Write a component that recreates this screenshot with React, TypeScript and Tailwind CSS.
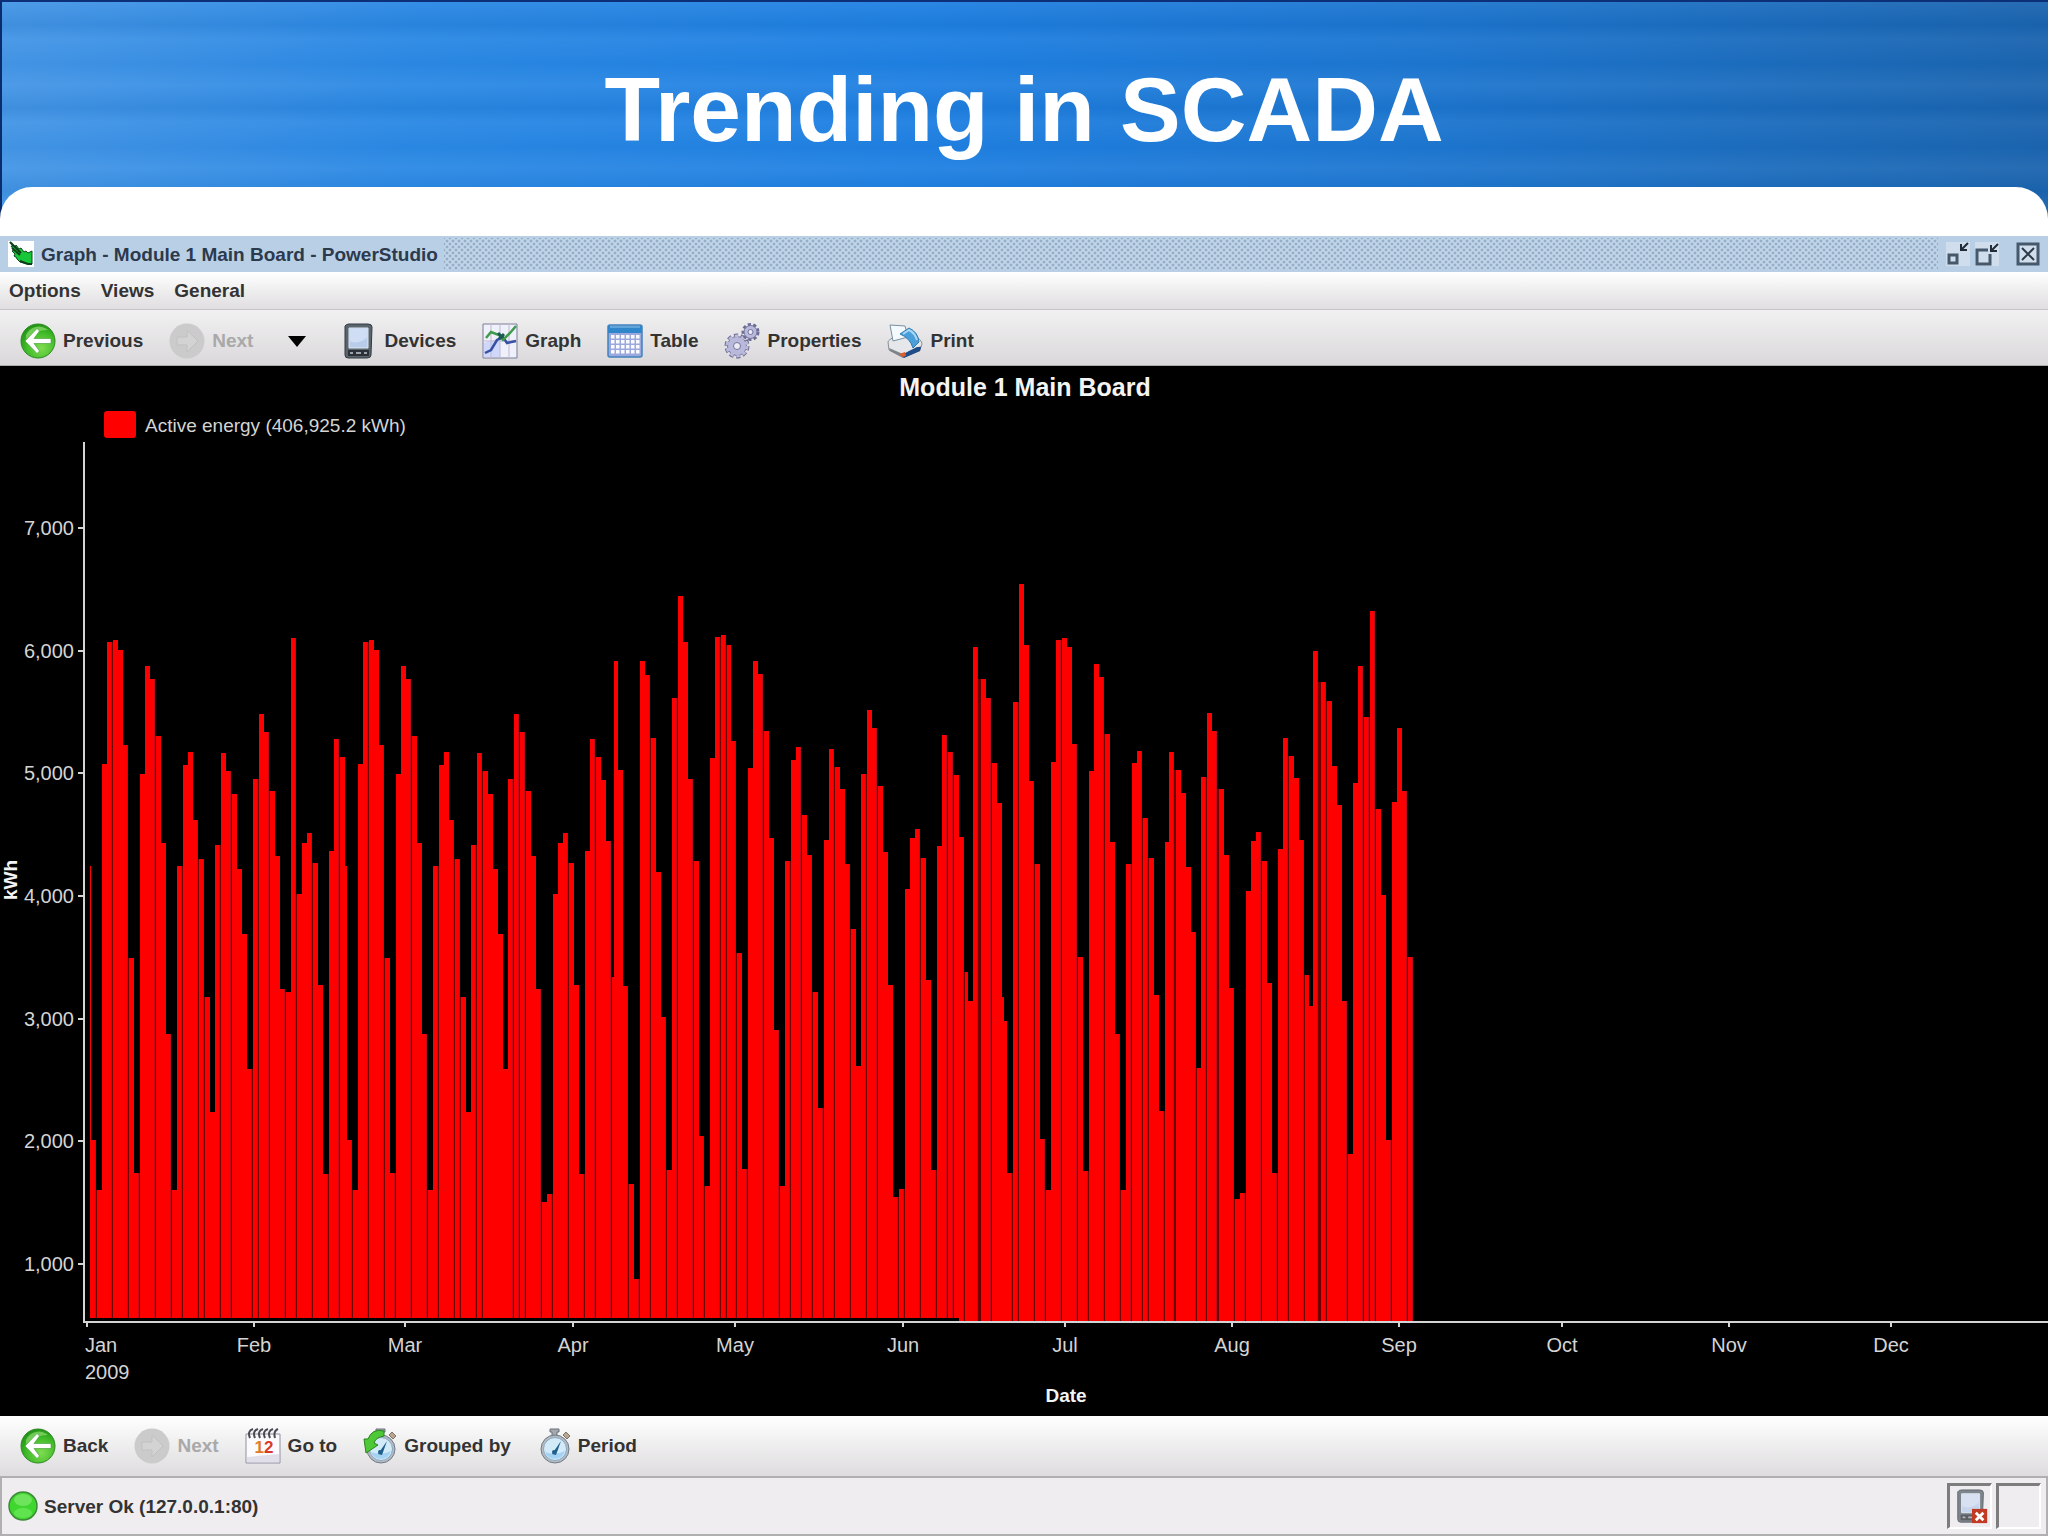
import type { ReactNode } from "react";

// [left edge, kWh] of every daily bar
const bars: [number, number][] = [
  [90, 4248], [91, 2010], [97, 1600], [102, 5080], [107, 6072], [113, 6090], [118, 6005],
  [123, 5233], [129, 3493], [134, 1745], [140, 4998], [145, 5876], [150, 5770], [156, 5305],
  [161, 4431], [166, 2875], [172, 1600], [177, 4248], [183, 5071], [188, 5173], [193, 4619],
  [199, 4299], [205, 3174], [210, 2236], [215, 4418], [221, 5164], [226, 5015], [232, 4832],
  [237, 4218], [242, 3694], [247, 2590], [253, 4956], [259, 5480], [264, 5335], [270, 4857],
  [275, 4325], [280, 3238], [286, 3216], [291, 6102], [297, 4018], [302, 4431], [307, 4512],
  [313, 4273], [318, 3276], [323, 1737], [329, 4363], [334, 5280], [340, 5130], [345, 4248],
  [347, 2010], [353, 1600], [358, 5080], [363, 6072], [369, 6090], [374, 6005], [379, 5233],
  [385, 3493], [390, 1745], [396, 4998], [401, 5876], [406, 5770], [412, 5305], [417, 4431],
  [422, 2875], [428, 1600], [433, 4248], [439, 5071], [444, 5173], [449, 4619], [455, 4299],
  [461, 3174], [466, 2236], [471, 4418], [477, 5164], [483, 5015], [488, 4832], [493, 4218],
  [498, 3694], [503, 2590], [508, 4956], [514, 5480], [520, 5335], [526, 4857], [531, 4325],
  [536, 3238], [542, 1502], [547, 1571], [553, 4018], [558, 4431], [563, 4512], [569, 4273],
  [574, 3276], [579, 1737], [585, 4363], [590, 5280], [596, 5130], [601, 4943], [606, 4448],
  [612, 3340], [614, 5919], [618, 5028], [623, 3263], [629, 1652], [634, 880], [640, 5919],
  [645, 5804], [651, 5288], [656, 4192], [661, 3016], [667, 1763], [672, 5612], [678, 6448],
  [683, 6072], [688, 4956], [694, 4286], [699, 2044], [705, 1639], [710, 5122], [715, 6115],
  [721, 6128], [727, 6043], [731, 5267], [737, 3532], [742, 1775], [748, 5041], [753, 5919],
  [758, 5812], [764, 5348], [769, 4469], [774, 2909], [780, 1639], [785, 4286], [791, 5109],
  [796, 5211], [802, 4657], [807, 4337], [813, 3216], [818, 2274], [824, 4457], [829, 5198],
  [835, 5049], [840, 4870], [845, 4261], [851, 3732], [856, 2611], [861, 4998], [867, 5514],
  [872, 5373], [878, 4896], [883, 4359], [888, 3276], [893, 1545], [899, 1609], [905, 4060],
  [910, 4469], [915, 4546], [921, 4312], [926, 3319], [931, 1767], [937, 4406], [942, 5314],
  [948, 5173], [954, 4985], [959, 4482], [965, 3378], [968, 3140], [973, 6026], [981, 5770],
  [986, 5612], [992, 5088], [997, 4760], [1002, 3174], [1004, 2982], [1007, 1745], [1013, 5582],
  [1019, 6541], [1024, 6047], [1029, 4934], [1035, 4261], [1040, 2019], [1046, 1605], [1051, 5096],
  [1056, 6090], [1062, 6102], [1067, 6026], [1072, 5241], [1078, 3506], [1083, 1758], [1089, 5015],
  [1094, 5893], [1099, 5783], [1105, 5318], [1110, 4440], [1115, 2879], [1121, 1605], [1126, 4261],
  [1132, 5083], [1137, 5182], [1143, 4632], [1149, 4308], [1154, 3191], [1159, 2244], [1165, 4440],
  [1169, 5173], [1176, 5028], [1181, 4841], [1186, 4235], [1191, 3706], [1197, 2598], [1201, 4973],
  [1207, 5493], [1212, 5348], [1219, 4870], [1224, 4337], [1229, 3246], [1235, 1532], [1240, 1579],
  [1246, 4039], [1251, 4448], [1256, 4525], [1262, 4286], [1267, 3293], [1272, 1745], [1278, 4380],
  [1283, 5288], [1289, 5139], [1294, 4964], [1299, 4457], [1305, 3357], [1309, 3105], [1313, 5996],
  [1321, 5744], [1327, 5591], [1332, 5058], [1337, 4742], [1342, 3148], [1348, 1895], [1353, 4921],
  [1358, 5876], [1364, 5459], [1370, 6320], [1376, 4713], [1381, 4005], [1386, 2010], [1392, 4764],
  [1397, 5373], [1402, 4857], [1408, 3506], [1414, 0],
];

const months: [string, number][] = [
  ["Feb", 254], ["Mar", 405], ["Apr", 573], ["May", 735], ["Jun", 903], ["Jul", 1065],
  ["Aug", 1232], ["Sep", 1399], ["Oct", 1562], ["Nov", 1729], ["Dec", 1891],
];

const levels = [1000, 2000, 3000, 4000, 5000, 6000, 7000];

const toY = (kwh: number) => Math.round(898 - ((kwh - 1000) * 736) / 6000);

function EnergyChart() {
  return (
    <svg
      viewBox="0 0 2048 1050"
      className="block w-full bg-black font-['Liberation_Sans',sans-serif] font-normal"
      role="img"
      aria-label="Active energy per day"
    >
      <text x="1025" y="30" textAnchor="middle" fontSize="25" fontWeight="bold" fill="#f4f4f4">
        Module 1 Main Board
      </text>
      <rect x="104" y="45" width="32" height="27" rx="3" fill="#fe0000" />
      <text x="145" y="66" fontSize="19" fill="#d4d4d4">
        Active energy (406,925.2 kWh)
      </text>
      {bars.slice(0, -1).map(([x, kwh], i) => {
        const [nextX, nextKwh] = bars[i + 1];
        const base = x < 955 ? 952 : 955;
        const top = toY(kwh);
        const width = Math.min(5, nextX - x);
        const seam = nextX - x - width;
        const seamTop = Math.max(top, toY(nextKwh));
        return (
          <g key={x}>
            <rect x={x} y={top} width={width} height={base - top} fill="#fe0000" />
            {seam > 0 && (
              <rect x={x + width - 1} y={top} width="1" height={base - top} fill="#c40a1c" />
            )}
            {seam > 0 && seamTop < base && (
              <rect x={x + width} y={seamTop} width={seam} height={base - seamTop} fill="#6c0000" />
            )}
          </g>
        );
      })}
      <g fill="#d4d4d4">
        <rect x="83" y="76" width="2" height="881" />
        <rect x="83" y="955" width="1965" height="2" />
        <rect x="86" y="957" width="2" height="4" />
        {months.map(([name, x]) => (
          <rect key={name} x={x - 1} y="957" width="2" height="4" />
        ))}
        {levels.map((level) => (
          <rect key={level} x="78" y={toY(level) - 1} width="5" height="2" />
        ))}
      </g>
      <g fontSize="20" fill="#d4d4d4">
        {levels.map((level) => (
          <text key={level} x="74" y={toY(level) + 7} textAnchor="end">
            {level.toLocaleString("en-US")}
          </text>
        ))}
        <text x="85" y="986">Jan</text>
        <text x="85" y="1013">2009</text>
        {months.map(([name, x]) => (
          <text key={name} x={x} y="986" textAnchor="middle">
            {name}
          </text>
        ))}
      </g>
      <g fontSize="19" fontWeight="bold" fill="#f4f4f4" textAnchor="middle">
        <text x="1066" y="1036">Date</text>
        <text transform="translate(17 514) rotate(-90)">kWh</text>
      </g>
    </svg>
  );
}

function ArrowIcon({ disabled = false }: { disabled?: boolean }) {
  if (disabled) {
    return (
      <svg viewBox="0 0 36 36" className="size-9">
        <circle cx="18" cy="18" r="17.5" fill="#cbcbcb" />
        <path d="M18 7l11 11-11 11v-7H8v-8h10z" fill="#d3d3d3" stroke="#c1c1c1" />
      </svg>
    );
  }
  return (
    <svg viewBox="0 0 36 36" className="size-9">
      <defs>
        <radialGradient id="arrow-green" cx="0.6" cy="0.7" r="0.7">
          <stop offset="0" stopColor="#7fdc50" />
          <stop offset="0.6" stopColor="#43bd2b" />
          <stop offset="1" stopColor="#229316" />
        </radialGradient>
      </defs>
      <circle cx="18" cy="18" r="17" fill="url(#arrow-green)" stroke="#2c8a22" />
      <path d="M6 12a14 14 0 0 1 22-5c-8 0-15 3-22 9z" fill="#9be67c" opacity="0.6" />
      <path
        d="M17 5.5l2.5 2.5-5.5 7.5h17v5H14l5.5 7.5-2.5 2.5L5 18z"
        fill="#fff"
        stroke="#3d9a31"
        strokeWidth="0.6"
      />
    </svg>
  );
}

function DeviceBody() {
  return (
    <>
      <path d="M4 3q1-2 4-2h19q4 0 4 3l-1 28q0 3-4 3H7q-3 0-3-3z" fill="#59646d" stroke="#323a42" />
      <path d="M8 5h19v20H8z" fill="#b9cdea" stroke="#dde6f0" />
      <path d="M8.5 18c6 3 13 1 18-4V5.5h-18z" fill="#cfdef4" />
      <path d="M7 27h21v6H7z" fill="#2b3136" />
      <path d="M9 30h3m3 0h5m3 0h3" stroke="#9aa4aa" strokeWidth="2" />
    </>
  );
}

function DeviceIcon() {
  return (
    <svg viewBox="0 0 36 36" className="size-9">
      <DeviceBody />
    </svg>
  );
}

function GraphIcon() {
  return (
    <svg viewBox="0 0 36 36" className="size-9" fill="none">
      <path d="M1 1h34v34H1z" fill="#eef0fa" stroke="#7d7d99" />
      <path d="M2 20l16-5v19H2z" fill="#cfd8fa" />
      <path d="M18 1v34M27 1v34M9 1v34M1 18h34" stroke="#c3b8d3" />
      <path d="M3 30l6-3 6-10 6-3 4 6 9-2" stroke="#3550a5" strokeWidth="2.5" />
      <path d="M4 15l5-6 8 3 4 5 7-7 6-7" stroke="#3f9a4b" strokeWidth="2.5" />
      <path d="M16 10l5 5M17 16l5-5" stroke="#1d5a54" strokeWidth="3" />
    </svg>
  );
}

function TableIcon() {
  return (
    <svg viewBox="0 0 36 36" className="size-9" fill="none">
      <rect x="1" y="2" width="34" height="32" rx="2" fill="#9aa8dd" stroke="#3f82be" strokeWidth="1.5" />
      <path d="M1 3h34v7H1z" fill="#2f86cb" />
      <path d="M3 4h30" stroke="#8fc3ea" />
      {[4, 9, 14, 19, 24, 29].map((x) =>
        [12, 17, 22, 27].map((y) => (
          <rect key={`${x}-${y}`} x={x} y={y} width="3.5" height="3.5" fill="#fbfbff" />
        )),
      )}
    </svg>
  );
}

function GearsIcon() {
  return (
    <svg viewBox="0 0 36 36" className="size-9" fill="none">
      <circle cx="13" cy="23" r="10.5" stroke="#6c6c94" strokeWidth="4" strokeDasharray="4 2.6" />
      <circle cx="13" cy="23" r="9.5" fill="#b9b9dc" stroke="#74749c" />
      <circle cx="13" cy="23" r="10" stroke="#b9b9dc" strokeWidth="3" strokeDasharray="3.4 3" />
      <circle cx="13" cy="23" r="3.5" fill="#ecebf3" stroke="#74749c" />
      <circle cx="26.5" cy="9" r="7.5" stroke="#6c6c94" strokeWidth="3" strokeDasharray="3.2 2.2" />
      <circle cx="26.5" cy="9" r="6.5" fill="#b9b9dc" stroke="#74749c" />
      <circle cx="26.5" cy="9" r="2.5" fill="#ecebf3" stroke="#74749c" />
    </svg>
  );
}

function PrinterIcon() {
  return (
    <svg viewBox="0 0 36 36" className="size-9">
      <path d="M1 19q0-2 8-6l18-1q8 5 8 9l-2 6-17 7L2 27z" fill="#e6e7ea" stroke="#8a9097" />
      <path d="M2 25l14 6 18-8-1 5-17 7-13-7z" fill="#7d848c" />
      <path d="M3 2l15 1 3 11-15 4z" fill="#f3f9fd" stroke="#7890a3" />
      <path d="M13 11l9-6q9 4 10 14l-6 6q-3-10-13-14z" fill="#4a9fda" stroke="#2f7bb0" />
      <path d="M16 11l6-4q6 3 8 10" fill="none" stroke="#a8d6f5" strokeWidth="2" />
      <path d="M15 32l7-4 8-4 4 0-1 4-16 7z" fill="#1f4d88" />
      <path d="M12 31l6-2 1 4-4 1z" fill="#d8602c" />
    </svg>
  );
}

function CalendarIcon() {
  return (
    <svg viewBox="0 0 36 36" className="size-9">
      <path d="M1 6h34v29H1z" fill="#fbfafc" stroke="#8f8fa4" />
      <path d="M2 29l32-3v8H2z" fill="#e1e0ea" />
      <path
        d="M5 10q-3-7 3-9m2 9q-3-7 3-9m2 9q-3-7 3-9m2 9q-3-7 3-9m2 9q-3-7 3-9m2 9q-2-7 3-9"
        fill="none"
        stroke="#4b4b52"
        strokeWidth="2"
      />
      <text x="19" y="25" textAnchor="middle" fontSize="17" fontWeight="bold">
        <tspan fill="#e07a26">1</tspan>
        <tspan fill="#d8392b">2</tspan>
      </text>
    </svg>
  );
}

function StopwatchIcon({ grouped = false }: { grouped?: boolean }) {
  return (
    <svg viewBox="1 0 34 36" className="h-9 w-[34px]">
      <path d="M14 1h9v3h-2v5h-5V4h-2z" fill="#a5aab0" stroke="#6b7178" />
      <path d="M27 7l3-3 4 4-3 3z" fill="#b9a48e" stroke="#7d746b" />
      <circle cx="19" cy="21" r="14" fill="#b4bcc5" stroke="#6f7a86" />
      <circle cx="19" cy="21" r="11.5" fill="#d3ebf9" stroke="#8ba3b6" />
      <path d="M9 24a10.5 10.5 0 0 0 20-1q-10 5-20 1z" fill="#a4d2f2" />
      <path d="M16 26l9-13-5 14z" fill="#1f5f8e" />
      <circle cx="18" cy="24" r="2" fill="#1f5f8e" />
      {grouped && (
        <path
          d="M22 3q-12-3-16 8H2l2 14 12-8-4-2q2-6 10-7z"
          fill="#4fc838"
          stroke="#27831c"
        />
      )}
    </svg>
  );
}

function HandIcon() {
  return (
    <svg viewBox="0 0 26 26" className="size-[26px] bg-white">
      <path
        d="M2 1l5 5 1-2 3 4 2-1 3 4 2-1 2 2 4-2v13l-5 0-7-2-3-3-1-2-2-1 1-2-3-3 2-1-3-4 2 0z"
        fill="#18c63a"
        stroke="#0d4a1c"
      />
      <path d="M2 1l11 11M4 7l8 7M12 20l8 3h4" stroke="#0b3f18" strokeWidth="2" fill="none" />
    </svg>
  );
}

type ToolButtonProps = {
  icon: ReactNode;
  label: string;
  disabled?: boolean;
};

function ToolButton({ icon, label, disabled }: ToolButtonProps) {
  return (
    <button
      type="button"
      disabled={disabled}
      className="flex items-center gap-[7px] whitespace-nowrap disabled:text-[#a9a9a9]"
    >
      {icon}
      <span>{label}</span>
    </button>
  );
}

function TitleBar() {
  return (
    <div className="flex h-9 items-center bg-[#b9cfe6] px-2 text-[#2b3a4c]">
      <HandIcon />
      <h2 className="ml-[7px] pt-[2px] whitespace-nowrap">
        Graph - Module 1 Main Board - PowerStudio
      </h2>
      <div className="ml-[6px] h-8 flex-1 bg-[#c3d6e9] bg-[radial-gradient(circle,#7d99b6_0px,transparent_2px),radial-gradient(circle,#7d99b6_0px,transparent_2px)] bg-[length:6px_6px] bg-[position:0_0,3px_3px]" />
      <div className="ml-2 flex items-center">
        <button type="button" aria-label="Minimize">
          <svg viewBox="0 0 24 24" className="size-6" fill="none">
            <path d="M0 0h24v24H0z" fill="#cfddec" />
            <path d="M3 13h8v8H3z" stroke="#46586b" strokeWidth="3" />
            <path d="M22 1l-7 7M15 2v6h6" stroke="#222c38" strokeWidth="2" />
          </svg>
        </button>
        <button type="button" aria-label="Restore" className="ml-[5px]">
          <svg viewBox="0 0 24 24" className="size-6" fill="none">
            <path d="M0 0h24v24H0z" fill="#cfddec" />
            <path d="M13 8H2v14h13V12" stroke="#46586b" strokeWidth="3" />
            <path d="M23 2l-7 7M16 3v6h6" stroke="#222c38" strokeWidth="2" />
          </svg>
        </button>
        <button type="button" aria-label="Close" className="ml-[17px]">
          <svg viewBox="0 0 24 24" className="size-6" fill="none">
            <path d="M2 2h20v20H2z" fill="#cfddec" stroke="#46586b" strokeWidth="3" />
            <path d="M6 6l12 12M18 6L6 18" stroke="#2c3948" strokeWidth="2" />
          </svg>
        </button>
      </div>
    </div>
  );
}

function App() {
  return (
    <div className="flex min-h-screen flex-col bg-white font-['Liberation_Sans',sans-serif] text-[19px] leading-6 font-bold text-[#333]">
      <header className="border-t-2 border-[#0c2f78] bg-[#1f80e0] bg-[linear-gradient(90deg,#0b2c6a_2px,transparent_2px),repeating-linear-gradient(180deg,#ffffff0d_0px,#00408014_23px,#ffffff0a_37px,#00408008_62px,#ffffff0d_83px),linear-gradient(95deg,#4596e6_0%,#2b89e4_20%,#1f80e2_45%,#1d76cf_70%,#1b64ae_100%)]">
        <h1 className="pt-[62px] pb-8 text-center text-[91px] leading-[91px] text-white">
          Trending in SCADA
        </h1>
        <div className="h-[49px] rounded-t-[32px] bg-white" />
      </header>

      <TitleBar />

      <nav className="flex gap-5 border-b border-[#c4c4c6] bg-linear-to-b from-white to-[#e0dee0] px-[9px] pt-[7px] pb-[6px]">
        <button type="button">Options</button>
        <button type="button">Views</button>
        <button type="button">General</button>
      </nav>

      <div className="flex items-center gap-[26px] border-b border-[#aaa] bg-linear-to-b from-[#f2f1f2] to-[#dad8da] px-5 pt-[13px] pb-[6px]">
        <ToolButton icon={<ArrowIcon />} label="Previous" />
        <ToolButton icon={<ArrowIcon disabled />} label="Next" disabled />
        <button type="button" aria-label="More" className="mx-[9px]">
          <svg viewBox="0 0 18 11" className="h-[11px] w-[18px]">
            <path d="M0 0h18L9 11z" fill="#000" />
          </svg>
        </button>
        <ToolButton icon={<DeviceIcon />} label="Devices" />
        <ToolButton icon={<GraphIcon />} label="Graph" />
        <ToolButton icon={<TableIcon />} label="Table" />
        <ToolButton icon={<GearsIcon />} label="Properties" />
        <ToolButton icon={<PrinterIcon />} label="Print" />
      </div>

      <EnergyChart />

      <div className="flex items-center gap-[26px] bg-linear-to-b from-white to-[#dedcde] px-5 py-3">
        <ToolButton icon={<ArrowIcon />} label="Back" />
        <ToolButton icon={<ArrowIcon disabled />} label="Next" disabled />
        <ToolButton icon={<CalendarIcon />} label="Go to" />
        <ToolButton icon={<StopwatchIcon grouped />} label="Grouped by" />
        <ToolButton icon={<StopwatchIcon />} label="Period" />
      </div>

      <footer className="flex flex-1 items-center gap-[6px] border-2 border-[#b0b0b0] bg-[#efedef] pr-[5px] pl-[6px]">
        <svg viewBox="0 0 30 30" className="size-[30px]">
          <circle cx="15" cy="15" r="14" fill="#3fd62f" stroke="#3f8a3a" strokeWidth="1.5" />
          <ellipse cx="15" cy="9" rx="9" ry="6" fill="#8cec7c" opacity="0.6" />
          <ellipse cx="15" cy="22" rx="9" ry="5" fill="#6ee85c" opacity="0.7" />
        </svg>
        <span className="pt-[2px]">Server Ok (127.0.0.1:80)</span>
        <div className="ml-auto flex gap-1">
          <div className="flex h-[46px] w-[45px] items-center border-t-3 border-r-2 border-b-2 border-l-3 border-t-[#7d7d7d] border-r-white border-b-white border-l-[#7d7d7d] pl-1">
            <svg viewBox="0 0 38 38" className="size-9">
              <g opacity="0.75">
                <DeviceBody />
              </g>
              <path d="M19 21h16v15H19z" fill="#c23a24" />
              <path d="M23 25l8 8M31 25l-8 8" stroke="#fff" strokeWidth="3" />
            </svg>
          </div>
          <div className="h-[46px] w-[45px] border-t-3 border-r-2 border-b-2 border-l-3 border-t-[#7d7d7d] border-r-white border-b-white border-l-[#7d7d7d]" />
        </div>
      </footer>
    </div>
  );
}

export default App;
